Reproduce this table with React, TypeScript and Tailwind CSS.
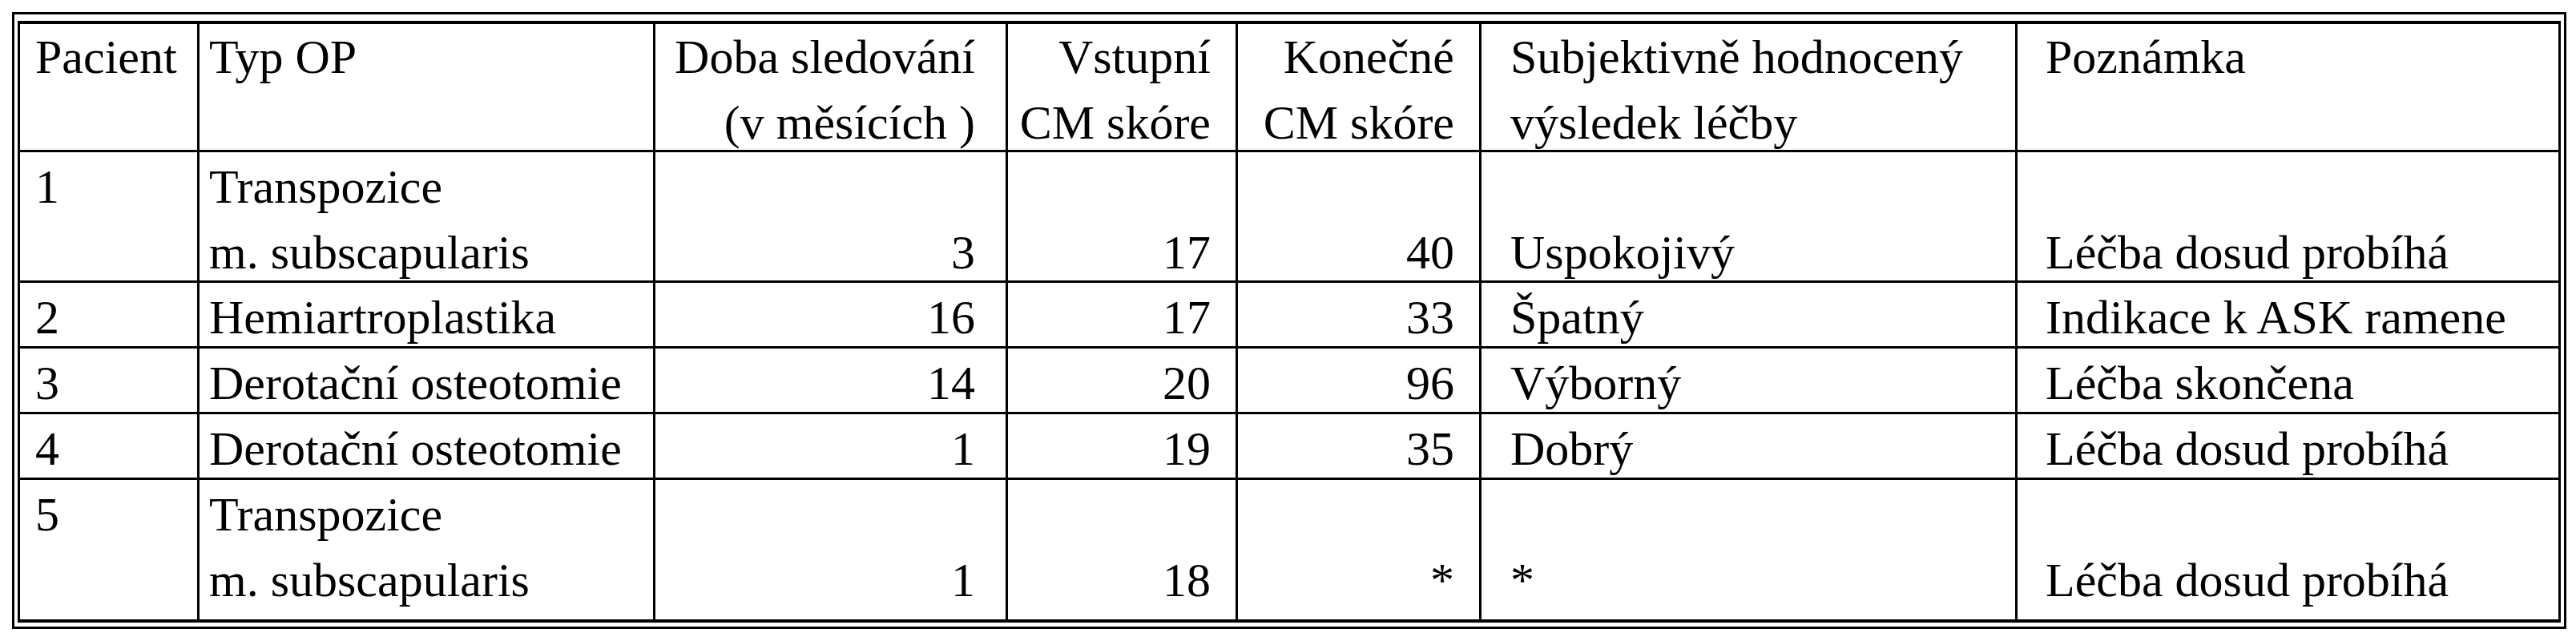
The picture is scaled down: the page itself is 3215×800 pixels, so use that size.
import React from 'react';

type Row = { lines: string[][]; header?: boolean };

// padding / alignment per column
const colClass = [
  'pl-[19px] text-left',
  'pl-[12px] text-left',
  'pr-[38px] text-right',
  'pr-[31px] text-right',
  'pr-[31px] text-right',
  'pl-[36px] text-left',
  'pl-[35px] text-left',
];

const rows: Row[] = [
  {
    header: true,
    lines: [
      ['Pacient'],
      ['Typ OP'],
      ['Doba sledování', '(v měsících )'],
      ['Vstupní', 'CM skóre'],
      ['Konečné', 'CM skóre'],
      ['Subjektivně hodnocený', 'výsledek léčby'],
      ['Poznámka'],
    ],
  },
  {
    lines: [
      ['1'],
      ['Transpozice', 'm. subscapularis'],
      ['', '3'],
      ['', '17'],
      ['', '40'],
      ['', 'Uspokojivý'],
      ['', 'Léčba dosud probíhá'],
    ],
  },
  {
    lines: [['2'], ['Hemiartroplastika'], ['16'], ['17'], ['33'], ['Špatný'], ['Indikace k ASK ramene']],
  },
  {
    lines: [['3'], ['Derotační osteotomie'], ['14'], ['20'], ['96'], ['Výborný'], ['Léčba skončena']],
  },
  {
    lines: [['4'], ['Derotační osteotomie'], ['1'], ['19'], ['35'], ['Dobrý'], ['Léčba dosud probíhá']],
  },
  {
    lines: [
      ['5'],
      ['Transpozice', 'm. subscapularis'],
      ['', '1'],
      ['', '18'],
      ['', '*'],
      ['', '*'],
      ['', 'Léčba dosud probíhá'],
    ],
  },
];

const Cell: React.FC<{ lines: string[]; col: number; header?: boolean }> = ({ lines, col, header }) => (
  <div className={`bg-white overflow-hidden ${header ? 'pt-0' : 'pt-[2px]'} ${colClass[col]}`}>
    {lines.map((line, i) => (
      <div key={i} className="whitespace-nowrap">
        {line || '\u00a0'}
      </div>
    ))}
  </div>
);

export default function App() {
  return (
    <div className="min-h-screen bg-white pt-[15px] pl-[15px]">
      <div className="w-fit border-[3px] border-black px-[4px] pt-[8px] pb-[5px]">
        {/* Inner table: black background shows through the gaps as rules */}
        <div
          className="grid grid-cols-[221px_566px_437px_284px_301px_666px_675px] grid-rows-[157px_160px_79px_79px_79px_174px] gap-[3px] bg-black px-[3px] py-[4px] text-black text-[60px] leading-[82px]"
          style={{ fontFamily: '"Liberation Serif", "Times New Roman", serif' }}
        >
          {rows.map((row, r) =>
            row.lines.map((lines, c) => <Cell key={`${r}-${c}`} lines={lines} col={c} header={row.header} />)
          )}
        </div>
      </div>
    </div>
  );
}
